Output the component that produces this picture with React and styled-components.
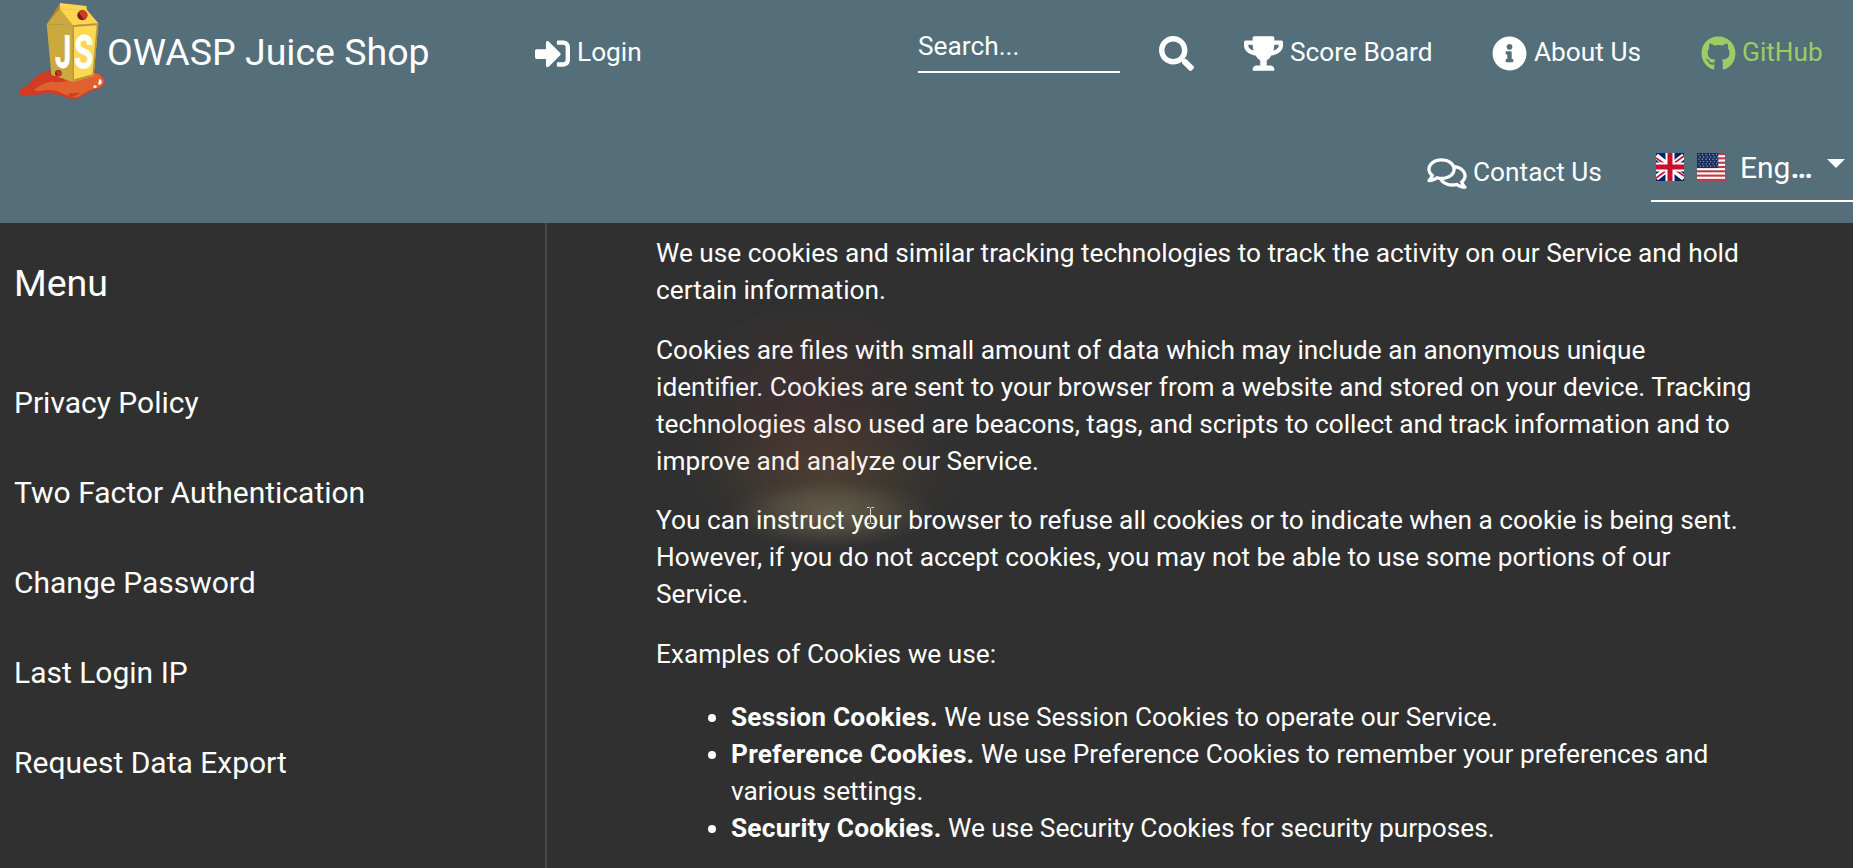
import React from "react";
import styled, { createGlobalStyle } from "styled-components";
import { FaSignInAlt, FaSearch, FaTrophy, FaInfoCircle, FaGithub, FaRegComments } from "react-icons/fa";

const GlobalStyle = createGlobalStyle`
  * { box-sizing: border-box; }
  html, body { margin: 0; background: #303030; overflow: hidden; }
  body { font-family: Roboto, "Liberation Sans", sans-serif; color: #fff; }
`;

const Page = styled.div`
  position: relative;
  width: 1853px;
  height: 868px;
  display: flex;
  flex-direction: column;
  overflow: hidden;
  background: #303030;
`;

const Header = styled.header`
  height: 223px;
  flex: none;
  background: #546e7a;
`;

const HeaderRow = styled.div`
  display: flex;
  align-items: center;
  height: ${(p) => p.$height}px;
  padding-top: ${(p) => p.$top || 0}px;
  padding-left: ${(p) => p.$left || 0}px;
`;

const Brand = styled.div`
  display: flex;
  align-items: center;
  width: 535px;
  padding-left: 18px;

  svg { flex: none; margin: -3px -1px 0 0; }
`;

const Title = styled.span`
  font-size: 37.5px;
  line-height: 60px;
  white-space: nowrap;
`;

const NavItem = styled.a`
  display: flex;
  align-items: center;
  gap: ${(p) => p.$gap || 6}px;
  color: ${(p) => p.$color || "#fff"};
  font-size: 26.25px;
  line-height: 40px;
  white-space: nowrap;
  width: ${(p) => p.$width}px;

  svg { flex: none; width: ${(p) => p.$icon || 35}px; height: 35px; margin-top: 3px; }
`;

const SearchField = styled.div`
  width: 202px;
  height: 46px;
  margin-right: 39px;
  align-self: flex-start;
  margin-top: 27px;
  border-bottom: 2px solid #fff;
  font-size: 26.25px;
  line-height: 38px;
`;

const SearchButton = styled.span`
  display: flex;
  width: 85px;
  padding-top: 3px;
`;

const LanguageSelect = styled.div`
  display: flex;
  align-items: flex-start;
  width: 202px;
  height: 52px;
  margin-top: 7px;
  padding: 3px 0 0 5px;
  border-bottom: 2px solid #fff;
`;

const Flag = styled.svg`
  flex: none;
  width: 28px;
  height: 28px;
  margin-right: 13px;
`;

const Language = styled.span`
  width: 87px;
  margin-left: 2px;
  font-size: 30px;
  line-height: 30px;

  b { font-weight: 700; }
`;

const Caret = styled.span`
  margin-top: 6px;
  border: 9.5px solid transparent;
  border-top-color: #fff;
  border-bottom: 0;
`;

const Body = styled.div`
  display: flex;
  flex: 1;
  min-height: 0;
`;

const Sidebar = styled.nav`
  width: 547px;
  flex: none;
  padding: 15px 0 0 14px;
  border-right: 2px solid #494949;
`;

const MenuTitle = styled.h2`
  height: 119px;
  margin: 0;
  padding-top: 15px;
  font-size: 37.5px;
  font-weight: 400;
  line-height: 60px;
`;

const MenuLink = styled.a`
  display: flex;
  align-items: center;
  height: 90px;
  font-size: 30px;
`;

const Content = styled.main`
  width: 1209px;
  padding: 12px 0 0 109px;
  font-size: 26.25px;
  line-height: 37px;

  p { margin: 0 0 22.5px; }
  ul { margin: 26.25px 0; padding-left: 75px; }
  strong { letter-spacing: 0.21px; }
`;

const Glow = styled.div`
  position: absolute;
  left: 670px;
  top: 310px;
  width: 310px;
  height: 260px;
  pointer-events: none;
  background:
    radial-gradient(ellipse 105px 36px at 160px 203px, rgba(255, 248, 185, 0.19), rgba(255, 245, 175, 0.12) 45%, rgba(255, 245, 175, 0.03) 80%, transparent),
    radial-gradient(ellipse 140px 75px at 157px 165px, rgba(255, 175, 60, 0.11), rgba(240, 160, 60, 0.06) 50%, rgba(240, 160, 60, 0.015) 80%, transparent),
    radial-gradient(ellipse 140px 115px at 140px 97px, rgba(181, 50, 55, 0.11), rgba(181, 50, 55, 0.06) 50%, rgba(181, 50, 55, 0.015) 80%, transparent);
`;

const TextCursor = styled.svg`
  position: absolute;
  left: 866px;
  top: 507px;
`;

function Logo() {
  return (
    <svg width="90" height="100" viewBox="22 0 270 300">
      <path d="M24 273C27 263 44 261 60 244C82 219 98 211 126 208L244 213C268 214 281 226 282 242C282 258 266 264 250 267C226 274 213 293 191 294C164 293 147 277 115 278C82 279 59 285 36 285C26 283 23 279 24 273Z" fill="#cf3b23" />
      <path d="M70 268C90 248 107 244 133 239L249 215C268 217 280 229 280 243C279 257 263 262 247 265C224 271 211 289 193 290C168 289 154 269 118 267C98 265 83 274 70 268Z" fill="#de612e" />
      <ellipse cx="184" cy="282" rx="11" ry="5" fill="#cf3b23" />
      <ellipse cx="198" cy="278" rx="7" ry="3" fill="#cf3b23" />
      <ellipse cx="253" cy="257" rx="5" ry="4" fill="#fff" />
      <path d="M265 234C277 236 275 251 264 252C261 245 266 243 265 234Z" fill="#fff" />
      <path d="M108 69L186 73V242L122 222Z" fill="#cba93f" />
      <path d="M186 73L263 67L249 224L186 242Z" fill="#fdd850" />
      <path d="M148 6L108 69L148 38Z" fill="#b98234" />
      <path d="M148 22L109 69L186 73Z" fill="#cba93f" />
      <path d="M148 6L227 15L229 27L263 67L186 73L148 24Z" fill="#fdd64d" />
      <path d="M186 73L263 67L249 224L186 242Z M190 78V235L245 220L258 73Z" fill="#b8953b" fillRule="evenodd" />
      <path d="M148 24L229 27" stroke="#e4bd45" strokeWidth="1.5" />
      <circle cx="215" cy="43" r="15" fill="#7a1c12" />
      <path d="M204 34C214 24 229 29 231 42C230 50 226 54 221 57Z" fill="#cf3b23" />
      <g fill="#fff" stroke="#fff" strokeWidth="2" fontFamily="Roboto, sans-serif" fontWeight="700" fontSize="138">
        <text transform="matrix(.63 .07 0 1 133 197)">J</text>
        <text transform="matrix(.68 -.05 0 1 190 203)">S</text>
      </g>
      <circle cx="143" cy="217" r="10" fill="#8f2418" />
      <path d="M136 214C141 206 153 211 151 218L139 233L130 229L143 219Z" fill="#cf3b23" />
      <path d="M113 239L154 232L170 241L135 244Z" fill="#cf3b23" />
    </svg>
  );
}

function UkFlag() {
  return (
    <Flag viewBox="0 0 28 28">
      <path fill="#012169" d="M0 0h28v28H0z" />
      <path d="M0 3L28 25M28 3L0 25" stroke="#fff" strokeWidth="6" />
      <path d="M0 5L10 12M0 25L11 17M28 3L17 11M28 23L18 16" stroke="#c8102e" strokeWidth="1.6" />
      <path d="M14 0V28M0 14H28" stroke="#fff" strokeWidth="9" />
      <path d="M14 0V28M0 14H28" stroke="#c8102e" strokeWidth="5" />
    </Flag>
  );
}

function UsFlag() {
  const stars = [];
  for (let r = 0; r < 6; r++) {
    for (let c = 0; c < 6; c++) {
      stars.push(<circle key={`${r}-${c}`} cx={2 + c * 3.5 + (r % 2) * 1.2} cy={1.6 + r * 2.3} r="0.6" />);
    }
  }
  return (
    <Flag viewBox="0 0 28 28">
      <path fill="#fff" d="M0 0h28v28H0z" />
      {[0, 1, 2, 3, 4, 5, 6].map((i) => (
        <path key={i} d={`M0 ${i * 4.308}h28v2.154H0z`} fill="#bd3d44" />
      ))}
      <path fill="#192f5d" d="M0 0h21.3v15.08H0z" />
      <g fill="#b9c1d2">{stars}</g>
    </Flag>
  );
}

const links = ["Privacy Policy", "Two Factor Authentication", "Change Password", "Last Login IP", "Request Data Export"];

export default function App() {
  return (
    <Page>
      <GlobalStyle />
      <Header>
        <HeaderRow $height={104}>
          <Brand>
            <Logo />
            <Title>OWASP Juice Shop</Title>
          </Brand>
          <NavItem $width={383} $gap={7}>
            <FaSignInAlt />
            <span>Login</span>
          </NavItem>
          <SearchField>Search...</SearchField>
          <SearchButton><FaSearch size={35} /></SearchButton>
          <NavItem $width={248} $icon={39} $gap={7}>
            <FaTrophy />
            <span>Score Board</span>
          </NavItem>
          <NavItem $width={209} $gap={7}>
            <FaInfoCircle />
            <span>About Us</span>
          </NavItem>
          <NavItem $color="#9ccc65">
            <FaGithub />
            <span>GitHub</span>
          </NavItem>
        </HeaderRow>
        <HeaderRow $height={119} $top={17} $left={1427}>
          <NavItem $width={224} $icon={40}>
            <FaRegComments />
            <span>Contact Us</span>
          </NavItem>
          <LanguageSelect>
            <UkFlag />
            <UsFlag />
            <Language>Eng<b>…</b></Language>
            <Caret />
          </LanguageSelect>
        </HeaderRow>
      </Header>
      <Body>
        <Sidebar>
          <MenuTitle>Menu</MenuTitle>
          {links.map((label) => (
            <MenuLink key={label}>{label}</MenuLink>
          ))}
        </Sidebar>
        <Content>
          <p>We use cookies and similar tracking technologies to track the activity on our Service and hold certain information.</p>
          <p>Cookies are files with small amount of data which may include an anonymous unique identifier. Cookies are sent to your browser from a website and stored on your device. Tracking technologies also used are beacons, tags, and scripts to collect and track information and to improve and analyze our Service.</p>
          <p>You can instruct your browser to refuse all cookies or to indicate when a cookie is being sent. However, if you do not accept cookies, you may not be able to use some portions of our Service.</p>
          <p>Examples of Cookies we use:</p>
          <ul>
            <li><strong>Session Cookies.</strong> We use Session Cookies to operate our Service.</li>
            <li><strong>Preference Cookies.</strong> We use Preference Cookies to remember your preferences and various settings.</li>
            <li><strong>Security Cookies.</strong> We use Security Cookies for security purposes.</li>
          </ul>
        </Content>
      </Body>
      <Glow />
      <TextCursor width="9" height="17" viewBox="0 0 9 17">
        <path d="M1 .5h2.5L4.5 1.5 5.5 .5H8M4.5 1.5V15.5M1 16.5h2.5L4.5 15.5 5.5 16.5H8" fill="none" stroke="#d8d8d8" />
      </TextCursor>
    </Page>
  );
}
